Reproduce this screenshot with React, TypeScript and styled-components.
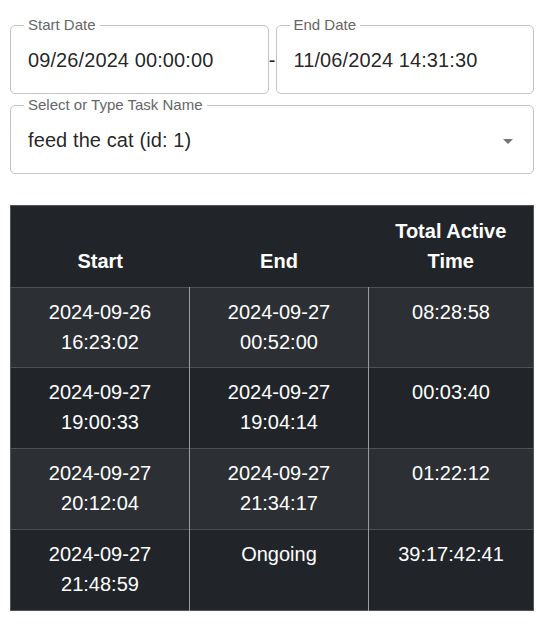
import styled, {createGlobalStyle} from "styled-components";

type Session = {
    start: string[];
    end: string[];
    total: string;
}

const sessions: Session[] = [
    {start: ["2024-09-26", "16:23:02"], end: ["2024-09-27", "00:52:00"], total: "08:28:58"},
    {start: ["2024-09-27", "19:00:33"], end: ["2024-09-27", "19:04:14"], total: "00:03:40"},
    {start: ["2024-09-27", "20:12:04"], end: ["2024-09-27", "21:34:17"], total: "01:22:12"},
    {start: ["2024-09-27", "21:48:59"], end: ["Ongoing"], total: "39:17:42:41"},
]

const GlobalStyle = createGlobalStyle`
    * {
        box-sizing: border-box;
    }
    body {
        margin: 0;
        background: #fff;
        font-family: "Liberation Sans", Arial, sans-serif;
    }
`

const Field = ({label, value, select}: { label: string; value: string; select?: boolean }) => {
    return (
        <OutlinedBox>
            <Label>{label}</Label>
            <Value>{value}</Value>
            {select && <Arrow/>}
        </OutlinedBox>
    )
}

export default function App() {
    return (
        <Page>
            <GlobalStyle/>
            <DateRow>
                <Field label="Start Date" value="09/26/2024 00:00:00"/>
                <Dash>-</Dash>
                <Field label="End Date" value="11/06/2024 14:31:30"/>
            </DateRow>
            <Field label="Select or Type Task Name" value="feed the cat (id: 1)" select/>

            <Table>
                <colgroup>
                    <col style={{width: "179px"}}/>
                    <col style={{width: "179px"}}/>
                    <col/>
                </colgroup>
                <thead>
                <tr>
                    <Th>Start</Th>
                    <Th>End</Th>
                    <Th>Total Active Time</Th>
                </tr>
                </thead>
                <tbody>
                {sessions.map((s, i) => (
                    <Row key={i} $striped={i % 2 === 0}>
                        <Td>{s.start.map(l => <div key={l}>{l}</div>)}</Td>
                        <Td>{s.end.map(l => <div key={l}>{l}</div>)}</Td>
                        <Td>{s.total}</Td>
                    </Row>
                ))}
                </tbody>
            </Table>
        </Page>
    );
}

const Page = styled.div`
    padding: 25px 8px 32px 10px;
    display: flex;
    flex-direction: column;
    gap: 11px;
`
const DateRow = styled.div`
    display: flex;
    align-items: center;
    & > div {
        flex: 1;
    }
`
const Dash = styled.span`
    width: 7px;
    text-align: center;
    font-size: 20px;
    color: #222;
    padding-top: 2px;
`
const OutlinedBox = styled.div`
    position: relative;
    height: 69px;
    padding: 0 16px 0 17px;
    border: 1px solid #c4c4c4;
    border-radius: 5px;
    display: flex;
    align-items: center;
    min-width: 0;
`
const Label = styled.span`
    position: absolute;
    left: 13px;
    top: -9px;
    padding: 0 4px;
    background: #fff;
    font-size: 15px;
    line-height: 16px;
    color: #666;
`
const Value = styled.div`
    font-size: 20px;
    letter-spacing: 0.1px;
    color: rgba(0, 0, 0, 0.87);
    margin-top: 1px;
`
const Arrow = styled.span`
    position: absolute;
    right: 20px;
    top: 33px;
    width: 0;
    height: 0;
    border-left: 5.5px solid transparent;
    border-right: 5.5px solid transparent;
    border-top: 5.5px solid #757575;
`
const Table = styled.table`
    margin-top: 20px;
    width: 524px;
    border-collapse: collapse;
    table-layout: fixed;
    border: 1px solid #505458;
    color: #fff;
    font-size: 20px;
    line-height: 30px;
    text-align: center;
`
const Th = styled.th`
    background: #212529;
    padding: 10px 10px 11px;
    vertical-align: bottom;
    font-weight: 700;
`
const Row = styled.tr<{ $striped: boolean }>`
    background: ${p => p.$striped ? "#2c3034" : "#212529"};
    border-top: 1px solid #4d5154;
`
const Td = styled.td`
    padding: 9px 10px 11px;
    vertical-align: top;
    tr:first-child > & {
        padding-bottom: 10px;
    }
    & + & {
        border-left: 1px solid #9a9c9e;
    }
`
